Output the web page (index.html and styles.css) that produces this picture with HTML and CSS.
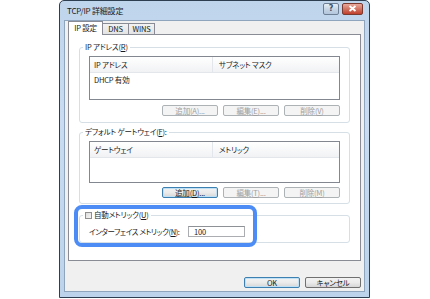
FILE: index.html
```html
<!DOCTYPE html>
<html lang="ja">
<head>
  <meta charset="UTF-8">
  <title>TCP/IP 詳細設定</title>
  <link rel="stylesheet" href="styles.css">
</head>
<body>

  <div class="window">
    <div class="titlebar">
      <span class="title">TCP/IP 詳細設定</span>
      <div class="caption-btns">
        <span class="cap-help">?</span>
        <span class="cap-close">
          <svg width="9" height="7" viewBox="0 0 9 7"><path d="M1.5 1 L7.5 6 M7.5 1 L1.5 6" stroke="#fff" stroke-width="1.8"/></svg>
        </span>
      </div>
    </div>

    <div class="client">
      <!-- tabs -->
      <div class="tabs">
        <span class="tab active">IP 設定</span>
        <span class="tab">DNS</span>
        <span class="tab">WINS</span>
      </div>

      <div class="panel">
        <!-- IP addresses -->
        <div class="group group-ip">
          <span class="group-label">IP アドレス(<u>R</u>)</span>
          <div class="list">
            <div class="list-head">
              <span class="col1">IP アドレス</span>
              <span class="col2">サブネット マスク</span>
            </div>
            <div class="list-row">DHCP 有効</div>
          </div>
          <div class="btn-row">
            <button class="btn" disabled>追加(<u>A</u>)...</button>
            <button class="btn" disabled>編集(<u>E</u>)...</button>
            <button class="btn" disabled>削除(<u>V</u>)</button>
          </div>
        </div>

        <!-- default gateways -->
        <div class="group group-gw">
          <span class="group-label">デフォルト ゲートウェイ(<u>F</u>):</span>
          <div class="list">
            <div class="list-head">
              <span class="col1">ゲートウェイ</span>
              <span class="col2">メトリック</span>
            </div>
            <div class="list-row"></div>
          </div>
          <div class="btn-row">
            <button class="btn btn-default">追加(<u>D</u>)...</button>
            <button class="btn" disabled>編集(<u>T</u>)...</button>
            <button class="btn" disabled>削除(<u>M</u>)</button>
          </div>
        </div>

        <!-- metric -->
        <div class="group group-metric">
          <label class="group-label check-label">
            <span class="checkbox"></span>自動メトリック(<u>U</u>)
          </label>
          <div class="metric-row">
            <span class="metric-label">インターフェイス メトリック(<u>N</u>):</span>
            <span class="textbox">100</span>
          </div>
        </div>

        <div class="highlight"></div>
      </div>

      <div class="footer">
        <button class="btn btn-ok">OK</button>
        <button class="btn btn-cancel">キャンセル</button>
      </div>
    </div>
  </div>

</body>
</html>
```

FILE: styles.css
```css
body {
  margin: 0;
  background: #fff;
  font-family: "Noto Sans CJK JP", "Noto Sans", sans-serif;
  font-size: 7.5px;
  line-height: 10px;
  letter-spacing: -0.2px;
  font-feature-settings: "palt";
  color: #1a1a1a;
  white-space: nowrap;
}

u {
  text-decoration: underline;
  text-underline-offset: 1px;
}

.window {
  margin-left: 59px;
  width: 311px;
  height: 298px;
  box-sizing: border-box;
  border: 1px solid #2e3f52;
  border-radius: 5px 5px 0 0;
  background: linear-gradient(#bfd5ec, #c9dcf1 40%, #bcd3eb);
  padding: 0 4px 5px 4px;
  display: flex;
  flex-direction: column;
}

.titlebar {
  height: 19px;
  display: flex;
  align-items: center;
  justify-content: space-between;
}

.title {
  margin-left: 3px;
  margin-top: 1px;
  font-size: 8px;
}

.caption-btns {
  display: flex;
  gap: 3px;
  margin-right: 2px;
  margin-top: -4px;
}

.cap-help,
.cap-close {
  height: 12px;
  box-sizing: border-box;
  border: 1px solid #6d7f94;
  border-radius: 2px;
  display: flex;
  align-items: center;
  justify-content: center;
}

.cap-help {
  width: 16px;
  background: linear-gradient(#e6eef7, #c6d5e6 50%, #b3c6dc);
  color: #3b4f66;
  font-family: "DejaVu Sans", sans-serif;
  font-size: 8px;
  font-weight: bold;
  letter-spacing: 0;
}

.cap-close {
  width: 21px;
  border-color: #7a3a30;
  background: linear-gradient(#e9a99b, #d27463 50%, #c0402c);
}

.client {
  flex: 1;
  background: #f0f0f0;
  border: 1px solid #8fa5bd;
  padding: 1px 3px 0 3px;
  display: flex;
  flex-direction: column;
}

.tabs {
  display: flex;
  align-items: flex-end;
  height: 12px;
  position: relative;
  z-index: 1;
}

.tab {
  height: 10px;
  line-height: 10px;
  width: 25px;
  border: 1px solid #898c95;
  border-bottom: none;
  background: linear-gradient(#f2f2f2, #e3e3e3);
  margin-left: -1px;
  text-align: center;
}

.tab.active {
  height: 13px;
  line-height: 12px;
  width: 33px;
  margin-left: 0;
  margin-bottom: -1px;
  background: #fff;
  position: relative;
  z-index: 2;
}

.panel {
  height: 227px;
  box-sizing: border-box;
  border: 1px solid #898c95;
  background: #fff;
  padding: 0 10px;
  position: relative;
}

.group {
  border: 1px solid #d5dfe5;
  border-radius: 3px;
  padding: 0 9px 6px 9px;
}

.group-ip {
  margin-top: 12px;
}

.group-gw {
  margin-top: 9px;
  padding-bottom: 5px;
}

.group-label {
  display: block;
  width: max-content;
  height: 10px;
  line-height: 10px;
  background: #fff;
  padding: 0 2px;
  margin: -6px 0 0 -6px;
}

.list {
  border: 1px solid #828790;
  margin-top: 4px;
  height: 44px;
  box-sizing: border-box;
}

.group-gw .list {
  height: 42px;
}

.list-head {
  height: 15px;
  line-height: 15px;
  display: flex;
  background: linear-gradient(#fff, #f1f2f4);
  border-bottom: 1px solid #e3e6ea;
}

.list-head .col1 {
  width: 118px;
  padding-left: 4px;
  border-right: 1px solid #e3e6ea;
}

.list-head .col2 {
  padding-left: 6px;
}

.list-row {
  height: 12px;
  line-height: 12px;
  padding-left: 4px;
  margin-top: 1px;
}

.btn-row {
  display: flex;
  justify-content: flex-end;
  gap: 5px;
  margin-top: 5px;
}

.group-gw .btn-row {
  margin-top: 4px;
}

.btn {
  font: inherit;
  letter-spacing: inherit;
  font-feature-settings: "palt";
  height: 11px;
  line-height: 9px;
  padding: 0;
  width: 56px;
  box-sizing: border-box;
  border: 1px solid #707070;
  border-radius: 2px;
  background: linear-gradient(#f2f2f2, #ebebeb 50%, #d6d6d6);
  color: #1a1a1a;
}

.btn:disabled {
  border-color: #adb2b5;
  background: #f4f4f4;
  color: #a0a0a0;
}

.btn-default,
.btn-ok {
  border-color: #3c7fb1;
  box-shadow: inset 0 0 0 1px #bfe0f5;
}

.group-metric {
  margin-top: 11px;
  padding-bottom: 5px;
}

.check-label {
  display: flex;
  align-items: center;
}

.checkbox {
  width: 7px;
  height: 7px;
  box-sizing: border-box;
  border: 1px solid #8f8f8f;
  background: linear-gradient(135deg, #dcdcdc, #f6f6f6);
  margin-right: 2px;
}

.metric-row {
  display: flex;
  align-items: center;
  margin-top: 6px;
}

.metric-label {
  width: 99px;
  flex-shrink: 0;
  letter-spacing: -0.4px;
}

.textbox {
  width: 57px;
  height: 11px;
  line-height: 9px;
  box-sizing: border-box;
  border: 1px solid #abadb3;
  border-top-color: #8e9196;
  padding-left: 5px;
  background: #fff;
}

.highlight {
  position: absolute;
  left: 5px;
  top: 170px;
  width: 183px;
  height: 42px;
  box-sizing: border-box;
  border: 4px solid #4c8cf4;
  border-radius: 8px;
}

.footer {
  display: flex;
  justify-content: flex-end;
  gap: 5px;
  margin-top: 16px;
}
```
